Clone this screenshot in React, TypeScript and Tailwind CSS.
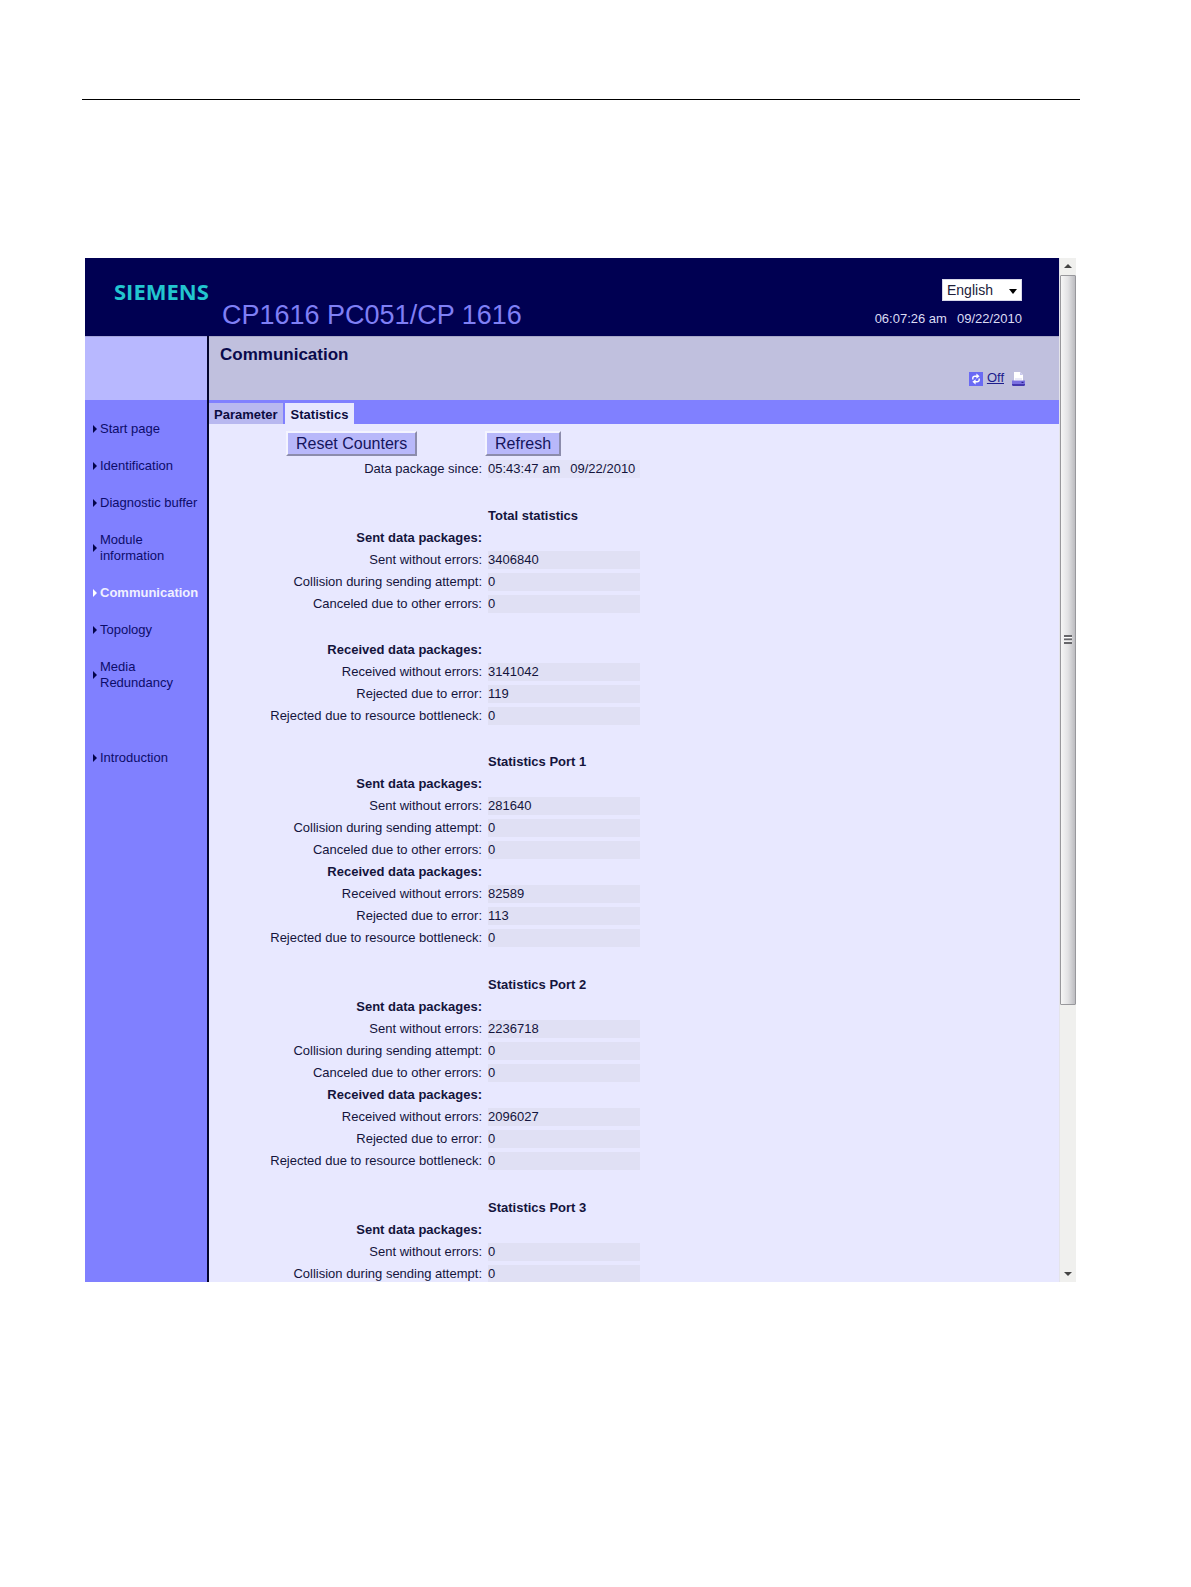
import React from "react";

type NavItem = { label: string; active?: boolean; last?: boolean; wraps?: boolean };

const NAV: NavItem[] = [
  { label: "Start page" },
  { label: "Identification" },
  { label: "Diagnostic buffer" },
  { label: "Module information", wraps: true },
  { label: "Communication", active: true },
  { label: "Topology" },
  { label: "Media Redundancy", wraps: true },
  { label: "Introduction", last: true },
];

type Row =
  | { kind: "title"; text: string }
  | { kind: "head"; text: string }
  | { kind: "value"; text: string; value: string }
  | { kind: "gap" }
  | { kind: "wide-gap" };

const title = (text: string): Row => ({ kind: "title", text });
const head = (text: string): Row => ({ kind: "head", text });
const val = (text: string, value: string): Row => ({ kind: "value", text, value });

const sent = (a: string, b: string, c: string): Row[] => [
  head("Sent data packages:"),
  val("Sent without errors:", a),
  val("Collision during sending attempt:", b),
  val("Canceled due to other errors:", c),
];

const received = (a: string, b: string, c: string): Row[] => [
  head("Received data packages:"),
  val("Received without errors:", a),
  val("Rejected due to error:", b),
  val("Rejected due to resource bottleneck:", c),
];

const ROWS: Row[] = [
  { kind: "wide-gap" },
  title("Total statistics"),
  ...sent("3406840", "0", "0"),
  { kind: "gap" },
  ...received("3141042", "119", "0"),
  { kind: "gap" },
  title("Statistics Port 1"),
  ...sent("281640", "0", "0"),
  ...received("82589", "113", "0"),
  { kind: "wide-gap" },
  title("Statistics Port 2"),
  ...sent("2236718", "0", "0"),
  ...received("2096027", "0", "0"),
  { kind: "wide-gap" },
  title("Statistics Port 3"),
  ...sent("0", "0", "0").slice(0, 3),
];

function Header() {
  return (
    <header className="flex h-[78px] bg-[#000052]">
      <div className="w-[124px] shrink-0 pl-[29px] pt-[19px] font-['Open_Sans',sans-serif] text-[22px] font-bold leading-[28px] text-[#22c5cf]">
        SIEMENS
      </div>
      <h1 className="grow pl-[13px] pt-[41px] text-[27px] leading-[32px] text-[#7f7ff5]">
        CP1616 PC051/CP 1616
      </h1>
      <div className="flex flex-col items-end pr-[37px] pt-[21px] text-[#dcdcf4]">
        <div className="relative">
          <select
            aria-label="Language"
            className="block h-[22px] w-[80px] appearance-none border border-[#d8d8ea] bg-white pl-[4px] text-[14px] leading-[20px] text-[#20203a]"
          >
            <option>English</option>
          </select>
          <svg
            className="pointer-events-none absolute right-[5px] top-[10px]"
            width="8"
            height="5"
            viewBox="0 0 8 5"
            aria-hidden="true"
          >
            <path d="M0 0h8L4 5z" fill="#000" />
          </svg>
        </div>
        <div className="flex gap-[10px] pt-[10px] text-[13px] leading-[16px]">
          <span>06:07:26 am</span>
          <span>09/22/2010</span>
        </div>
      </div>
    </header>
  );
}

function Sidebar() {
  return (
    <aside className="w-[124px] shrink-0 border-r-2 border-[#04042c] bg-[#8080ff]">
      <div className="h-[64px] border-t border-[#a4a4dc] bg-[#b8b8ff]" />
      <nav className="flex flex-col gap-[21px] pt-[21px]">
        {NAV.map((n) => (
          <a
            key={n.label}
            href="#"
            className={`flex items-center gap-[3px] pl-[8px] text-[13px] leading-[16px] ${
              n.active ? "font-bold text-[#f0f0ff]" : "text-[#0c0c6a]"
            } ${n.last ? "mt-[38px]" : ""}`}
          >
            <svg className="shrink-0" width="4" height="8" viewBox="0 0 4 8" aria-hidden="true">
              <path d="M0 0L4 4L0 8z" fill={n.active ? "#fff" : "#04044a"} />
            </svg>
            <span className={n.wraps ? "w-[80px]" : "whitespace-nowrap"}>{n.label}</span>
          </a>
        ))}
      </nav>
    </aside>
  );
}

function RefreshIcon() {
  return (
    <svg width="14" height="14" viewBox="0 0 14 14" aria-hidden="true">
      <rect width="14" height="14" fill="#6a6af4" />
      <g fill="none" stroke="#fff" strokeWidth="1.4">
        <path d="M3.8 7.4V6.2Q3.8 4.2 6 4.2H8" />
        <path d="M10.2 6.6V7.8Q10.2 9.8 8 9.8H6" />
      </g>
      <path d="M7.4 1.4L10.6 4.2L7.4 6.8z" fill="#fff" />
      <path d="M6.6 7.2L3.4 9.8L6.6 12.6z" fill="#fff" />
    </svg>
  );
}

function PrinterIcon() {
  return (
    <svg width="13" height="14" viewBox="0 0 13 14" aria-hidden="true">
      <path d="M2 0h6l3 3v6H2z" fill="#fff" />
      <path d="M8 0v3h3z" fill="#c9c9ee" />
      <path d="M3 6.5h7v1H3z" fill="#d4d4f0" />
      <path d="M0 8.5h13V13l-1 1H1l-1-1z" fill="#7a70e0" />
      <path d="M0 12h13v1l-1 1H1l-1-1z" fill="#4438ae" />
      <path d="M9.5 9.8h2v1.2h-2z" fill="#2c2494" />
    </svg>
  );
}

function StatisticsTable() {
  return (
    <table className="-mb-[3px] mt-[2px] border-collapse text-[13px] leading-[18px] text-[#14143c]">
      <tbody>
        <tr className="h-[22px]">
          <th scope="row" className="w-[279px] whitespace-nowrap p-0 pr-[6px] text-right font-normal">
            Data package since:
          </th>
          <td className="w-[152px] p-0">
            <div className="flex h-[18px] gap-[10px] whitespace-nowrap bg-[#e3e3f8]">
              <span>05:43:47 am</span>
              <span>09/22/2010</span>
            </div>
          </td>
        </tr>
        {ROWS.map((r, i) => {
          if (r.kind === "gap" || r.kind === "wide-gap") {
            return (
              <tr key={i} className={r.kind === "gap" ? "h-[24px]" : "h-[25px]"}>
                <td colSpan={2} className="p-0" />
              </tr>
            );
          }
          if (r.kind === "title") {
            return (
              <tr key={i} className="h-[22px]">
                <td className="p-0" />
                <th scope="col" className="whitespace-nowrap p-0 text-left font-bold">
                  {r.text}
                </th>
              </tr>
            );
          }
          return (
            <tr key={i} className="h-[22px]">
              <th
                scope="row"
                className={`whitespace-nowrap p-0 pr-[6px] text-right ${
                  r.kind === "head" ? "font-bold" : "font-normal"
                }`}
              >
                {r.text}
              </th>
              <td className="p-0">
                {r.kind === "value" && <div className="h-[18px] bg-[#e0e0f4]">{r.value}</div>}
              </td>
            </tr>
          );
        })}
      </tbody>
    </table>
  );
}

const BUTTON =
  "h-[25px] border-2 border-t-[#f4f4ff] border-l-[#f4f4ff] border-b-[#8c8cac] border-r-[#8c8cac] bg-[#b8b8fa] px-[8px] text-[16px] leading-[20px] text-[#14145c]";

function Main() {
  return (
    <main className="min-w-0 grow overflow-hidden bg-[#e8e8ff]">
      <div className="flex h-[64px] justify-between border-t border-[#a8a8c8] bg-[#c0c0de] pl-[11px] pr-[34px]">
        <h2 className="pt-[8px] text-[17px] font-bold leading-[20px] text-[#0a0a4c]">Communication</h2>
        <div className="flex pt-[35px]">
          <button type="button" aria-label="Automatic refresh" className="mr-[4px] h-[14px]">
            <RefreshIcon />
          </button>
          <a href="#" className="-mt-[2px] h-[16px] text-[13px] leading-[16px] text-[#1c1c8c] underline">
            Off
          </a>
          <button type="button" aria-label="Print" className="ml-[8px] h-[14px]">
            <PrinterIcon />
          </button>
        </div>
      </div>
      <div
        role="tablist"
        className="flex h-[24px] gap-[2px] bg-[#8080ff] pt-[3px] text-[13px] font-bold text-[#0c0c40]"
      >
        <button type="button" role="tab" aria-selected="false" className="h-[21px] bg-[#b8b8f0] px-[5px] pt-[3px] leading-[18px]">
          Parameter
        </button>
        <button type="button" role="tab" aria-selected="true" className="h-[21px] bg-[#e8e8ff] px-[6px] pt-[3px] leading-[18px]">
          Statistics
        </button>
      </div>
      <div className="pt-[7px]">
        <div className="flex pl-[77px]">
          <div className="w-[199px]">
            <button type="button" className={BUTTON}>
              Reset Counters
            </button>
          </div>
          <button type="button" className={BUTTON}>
            Refresh
          </button>
        </div>
        <StatisticsTable />
      </div>
    </main>
  );
}

function Scrollbar() {
  return (
    <div className="flex w-[17px] shrink-0 flex-col border-l border-[#e4e4ea] bg-[#f0f0ee]" aria-hidden="true">
      <div className="flex h-[17px] items-start justify-center pt-[6px]">
        <svg width="8" height="4" viewBox="0 0 8 4">
          <path d="M4 0L8 4H0z" fill="#444" />
        </svg>
      </div>
      <div className="flex grow-[734] items-center justify-center rounded-[1px] border border-[#98989c] bg-linear-to-r from-[#f6f6f6] via-[#e2e2e4] to-[#bcbcc0]">
        <svg width="8" height="9" viewBox="0 0 8 9">
          <path d="M0 0h8v2H0zM0 3.5h8v2H0zM0 7h8v2H0z" fill="#66666a" />
          <path d="M0 2h8v1H0zM0 5.5h8v1H0z" fill="#fff" />
        </svg>
      </div>
      <div className="grow-[266]" />
      <div className="flex h-[17px] items-center justify-center">
        <svg width="8" height="4" viewBox="0 0 8 4">
          <path d="M0 0h8L4 4z" fill="#444" />
        </svg>
      </div>
    </div>
  );
}

export default function App() {
  return (
    <div className="min-h-screen bg-white font-['Liberation_Sans',Arial,sans-serif]">
      <div className="pl-[82px] pr-[111px] pt-[99px]">
        <hr className="border-t border-black" />
      </div>
      <div className="ml-[85px] mr-[115px] mt-[158px] flex">
        <div className="flex min-w-0 grow flex-col">
          <Header />
          <div className="flex grow">
            <Sidebar />
            <Main />
          </div>
        </div>
        <Scrollbar />
      </div>
    </div>
  );
}
